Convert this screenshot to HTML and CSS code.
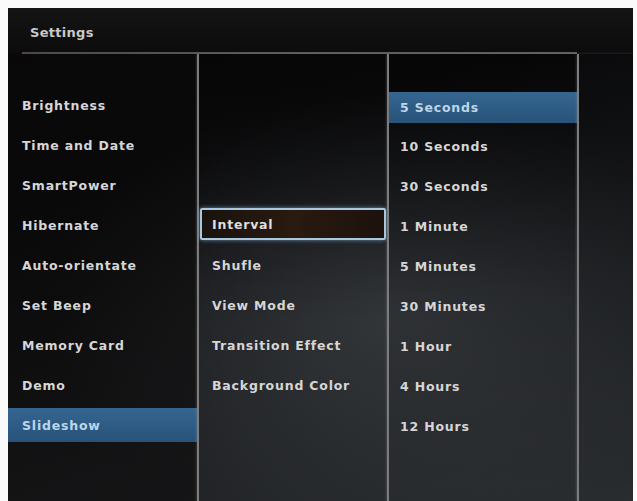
FILE: index.html
```html
<!doctype html>
<html lang="en">
  <head>
    <meta charset="UTF-8" />
    <title>Settings</title>
    <link rel="stylesheet" href="styles.css">
  </head>
  <body>
    <div class="screen">
      <div class="header">
        <div class="title">Settings</div>
      </div>
      <div class="rule"></div>

      <div class="columns">
        <ul class="menu menu-main">
          <li>Brightness</li>
          <li>Time and Date</li>
          <li>SmartPower</li>
          <li>Hibernate</li>
          <li>Auto-orientate</li>
          <li>Set Beep</li>
          <li>Memory Card</li>
          <li>Demo</li>
          <li class="selected">Slideshow</li>
        </ul>

        <ul class="menu menu-sub">
          <li class="focused">Interval</li>
          <li>Shufle</li>
          <li>View Mode</li>
          <li>Transition Effect</li>
          <li>Background Color</li>
        </ul>

        <ul class="menu menu-values">
          <li class="selected">5 Seconds</li>
          <li>10 Seconds</li>
          <li>30 Seconds</li>
          <li>1 Minute</li>
          <li>5 Minutes</li>
          <li>30 Minutes</li>
          <li>1 Hour</li>
          <li>4 Hours</li>
          <li>12 Hours</li>
        </ul>

        <div class="spare"></div>
      </div>
    </div>
  </body>
</html>
```

FILE: styles.css
```css
* {
  box-sizing: border-box;
}

html,
body {
  margin: 0;
  padding: 0;
  height: 100%;
  background: #fafafa;
  overflow: hidden;
}

.screen {
  margin: 8px 4px 0 8px;
  height: 493px;
  display: flex;
  flex-direction: column;
  font-family: "DejaVu Sans", sans-serif;
  font-weight: bold;
  color: #d6d6d6;
  background:
    radial-gradient(ellipse 55% 45% at 62% 62%, rgba(70, 74, 78, 0.55) 0%, rgba(40, 43, 46, 0) 100%),
    linear-gradient(160deg, #0b0a0a 0%, #0d0d0f 30%, #1d1f22 65%, #2a2d30 100%);
}

.header {
  height: 44px;
  padding: 4px 0 0 22px;
  display: flex;
  align-items: center;
  background: linear-gradient(180deg, #141414 0%, #0c0c0c 100%);
}

.title {
  font-size: 13px;
  letter-spacing: 0.3px;
  color: #c9c9c9;
}

.rule {
  margin-left: 14px;
  width: 555px;
  height: 2px;
  background: linear-gradient(90deg, #4a4a4a 0%, #5c5c5c 50%, #606060 100%);
}

.columns {
  flex: 1;
  display: grid;
  grid-template-columns: 189px 190px 190px 1fr;
}

.menu {
  list-style: none;
  margin: 0;
  padding: 34px 0 0 0;
  display: flex;
  flex-direction: column;
  gap: 6px;
}

.menu li {
  height: 34px;
  display: flex;
  align-items: center;
  font-size: 12.5px;
  letter-spacing: 0.8px;
  white-space: nowrap;
}

.menu-main {
  background: linear-gradient(180deg, rgba(8, 6, 6, 0.6) 0%, rgba(8, 6, 6, 0.5) 100%);
}

.menu-main li {
  padding-left: 14px;
}

.menu-sub,
.menu-values,
.spare {
  border-left: 2px solid #7c7c7c;
  box-shadow: -1px 0 2px rgba(150, 150, 150, 0.25);
}

.menu-sub {
  padding-top: 154px;
  background: linear-gradient(180deg, rgba(0, 0, 0, 0.45) 0%, rgba(0, 0, 0, 0) 60%);
}

.menu-sub li {
  margin: 0 1px;
  padding-left: 12px;
}

.menu-values {
  padding-top: 38px;
  background: linear-gradient(180deg, rgba(0, 0, 0, 0.55) 0%, rgba(0, 0, 0, 0.1) 55%, rgba(0, 0, 0, 0) 100%);
}

.menu-values li {
  padding-left: 11px;
}

.spare {
  background: linear-gradient(180deg, rgba(0, 0, 0, 0.35) 0%, rgba(0, 0, 0, 0) 100%);
}

.menu li.selected {
  background: linear-gradient(180deg, #356690 0%, #2d5a82 60%, #28527a 100%);
  color: #bcd6ea;
}

.menu-values li.selected {
  height: 31px;
}

.menu li.focused {
  height: 32px;
  margin-bottom: 2px;
  border: 2px solid #a9c7dd;
  border-radius: 2px;
  padding-left: 10px;
  background: linear-gradient(90deg, #1a120d 0%, #2a1a10 50%, #1c120c 100%);
  box-shadow: 0 0 4px rgba(140, 190, 230, 0.7);
  color: #dedede;
}
```
